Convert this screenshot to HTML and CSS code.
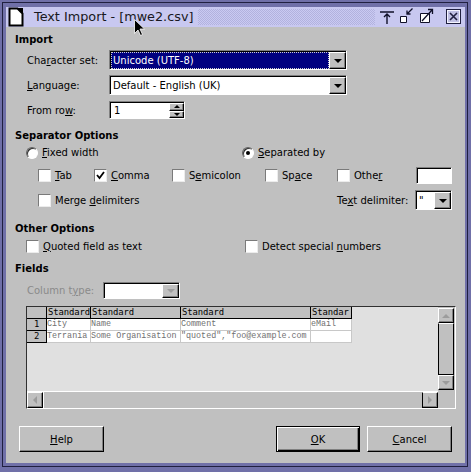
FILE: index.html
```html
<!DOCTYPE html>
<html lang="en">
<head>
  <meta charset="UTF-8" />
  <title>Text Import - [mwe2.csv]</title>
  <link rel="stylesheet" href="styles.css">
</head>
<body>
  <div class="frame">
    <div class="window">
      <div class="titlebar">
        <svg class="doc-icon" width="16" height="20" viewBox="0 0 16 20">
          <path d="M1.5 1.5H9.5L14.5 6.5V18.5H1.5Z" fill="#fff" stroke="#000" stroke-width="2"/>
          <path d="M9 1L15 7V1Z" fill="#000"/>
        </svg>
        <span class="title">Text Import - [mwe2.csv]</span>
        <div class="dots"></div>
        <svg class="tb-pin" width="15" height="20" viewBox="0 0 15 20">
          <path d="M0 5h14M7 7v10M4 10l3-3 3 3" stroke="#101028" stroke-width="1.4" fill="none"/>
        </svg>
        <svg class="tb-min" width="13" height="20" viewBox="0 0 13 20">
          <path d="M0.5 9.5h6v6h-6z" fill="#fff" stroke="#101028"/>
          <path d="M12.5 1.5L7 7M7 3.5V7H10.5" stroke="#101028" stroke-width="1.3" fill="none"/>
        </svg>
        <svg class="tb-max" width="14" height="20" viewBox="0 0 14 20">
          <path d="M0.5 6.5h9v9h-9z" fill="#fff" stroke="#101028"/>
          <path d="M2 14L12.5 2.5M8 2.5H12.5V7" stroke="#101028" stroke-width="1.3" fill="none"/>
        </svg>
        <svg class="tb-close" width="15" height="20" viewBox="0 0 15 20">
          <rect x="0.5" y="2.5" width="14" height="14" fill="#c0c0e4" stroke="#202040"/>
          <rect x="1.5" y="3.5" width="12" height="12" fill="none" stroke="#f4f4ff"/>
          <path d="M4 6l7 7M11 6l-7 7" stroke="#202040" stroke-width="1.6"/>
        </svg>
      </div>

      <div class="dialog">
        <div class="heading first">Import</div>

        <div class="row">
          <span class="label">Cha<u>r</u>acter set:</span>
          <div class="combo combo-wide">
            <div class="combo-text selected">Unicode (UTF-8)</div>
            <div class="drop"><i class="tri-down"></i></div>
          </div>
        </div>

        <div class="row">
          <span class="label"><u>L</u>anguage:</span>
          <div class="combo combo-wide">
            <div class="combo-text">Default - English (UK)</div>
            <div class="drop"><i class="tri-down"></i></div>
          </div>
        </div>

        <div class="row">
          <span class="label">From ro<u>w</u>:</span>
          <div class="spin">
            <div class="spin-text">1</div>
            <div class="spin-btns">
              <div class="spin-btn"><i class="tri-up small"></i></div>
              <div class="spin-btn"><i class="tri-down small"></i></div>
            </div>
          </div>
        </div>

        <div class="heading">Separator Options</div>

        <div class="row row-radio">
          <label class="opt opt-fixed"><span class="radio"></span><span><u>F</u>ixed width</span></label>
          <label class="opt"><span class="radio on"></span><span><u>S</u>eparated by</span></label>
        </div>

        <div class="row row-seps">
          <label class="opt w-tab"><span class="cb"></span><span><u>T</u>ab</span></label>
          <label class="opt w-comma">
            <span class="cb"><svg width="11" height="11" viewBox="0 0 11 11"><path d="M2 5l2.5 3L9 2" stroke="#000" stroke-width="1.8" fill="none"/></svg></span>
            <span><u>C</u>omma</span>
          </label>
          <label class="opt w-semi"><span class="cb"></span><span>S<u>e</u>micolon</span></label>
          <label class="opt w-space"><span class="cb"></span><span>Sp<u>a</u>ce</span></label>
          <label class="opt w-other"><span class="cb"></span><span>Othe<u>r</u></span></label>
          <div class="textbox"></div>
        </div>

        <div class="row row-seps">
          <label class="opt w-merge"><span class="cb"></span><span>Merge <u>d</u>elimiters</span></label>
          <span class="label-delim">Te<u>x</u>t delimiter:</span>
          <div class="combo combo-delim">
            <div class="combo-text">"</div>
            <div class="drop"><i class="tri-down"></i></div>
          </div>
        </div>

        <div class="heading other">Other Options</div>

        <div class="row row-radio row-quoted">
          <label class="opt opt-quoted"><span class="cb"></span><span><u>Q</u>uoted field as text</span></label>
          <label class="opt"><span class="cb"></span><span>Detect special <u>n</u>umbers</span></label>
        </div>

        <div class="heading">Fields</div>

        <div class="row row-type">
          <span class="label label-type">Column t<u>y</u>pe:</span>
          <div class="combo combo-type">
            <div class="combo-text"></div>
            <div class="drop"><i class="tri-down off"></i></div>
          </div>
        </div>

        <div class="preview">
          <div class="sheet">
            <div class="sheet-grid">
              <div class="hd"></div>
              <div class="hd">Standard</div>
              <div class="hd">Standard</div>
              <div class="hd">Standard</div>
              <div class="hd">Standar</div>

              <div class="rh">1</div>
              <div class="cell">City</div>
              <div class="cell">Name</div>
              <div class="cell">Comment</div>
              <div class="cell">eMail</div>

              <div class="rh">2</div>
              <div class="cell">Terrania</div>
              <div class="cell">Some Organisation</div>
              <div class="cell">"quoted","foo@example.com</div>
              <div class="cell"></div>
            </div>
          </div>
          <div class="vscroll">
            <div class="sb-btn"><i class="tri-up off"></i></div>
            <div class="thumb"></div>
            <div class="sb-btn"><i class="tri-down off"></i></div>
          </div>
          <div class="hscroll">
            <div class="sb-btn"><i class="tri-left off"></i></div>
            <div class="track"></div>
            <div class="sb-btn right"><i class="tri-right off"></i></div>
          </div>
          <div class="sb-corner"></div>
        </div>

        <div class="buttons">
          <button class="btn"><u>H</u>elp</button>
          <span class="spacer"></span>
          <button class="btn default"><u>O</u>K</button>
          <button class="btn"><u>C</u>ancel</button>
        </div>
      </div>
    </div>
  </div>

  <svg class="cursor" width="12" height="18" viewBox="0 0 12 18">
    <path d="M0.5 0.5V14.5L4 11L6.5 16.5L8.5 15.5L6 10H10.5Z" fill="#000" stroke="#fff" stroke-width="0.8"/>
  </svg>
</body>
</html>
```

FILE: styles.css
```css
* { box-sizing: border-box; }

body {
  margin: 0;
  width: 471px;
  height: 472px;
  overflow: hidden;
  position: relative;
  background: #7070a8;
  font-family: "DejaVu Sans", sans-serif;
  font-size: 10px;
  color: #000;
}

u { text-underline-offset: 1px; }

/* window decoration */
.frame {
  margin: 2px 3px 0 2px;
  border: 1px solid #202040;
  padding: 4px 2px 3px 3px;
}

.window {
  height: 456px;
  background: #c0c0c0;
  display: flex;
  flex-direction: column;
}

.titlebar {
  height: 20px;
  background: #c8c8f0;
  display: flex;
  align-items: center;
  flex-shrink: 0;
}

.doc-icon { margin-left: 2px; }

.title {
  margin-left: 10px;
  font-size: 12.8px;
  line-height: 20px;
  color: #181820;
  white-space: nowrap;
}

.dots {
  flex: 1;
  height: 16px;
  margin: 0 5px;
  background: repeating-conic-gradient(#b2b2de 0 25%, #cacaf2 0 50%) 0 0 / 2px 2px;
}

.tb-min { margin-left: 5px; }
.tb-max { margin-left: 7px; }
.tb-close { margin-left: 12px; margin-right: 4px; }

/* dialog body */
.dialog {
  flex: 1;
  padding: 6px 9px 0 9px;
}

.heading {
  font-weight: bold;
  line-height: 13px;
  height: 13px;
  margin-top: 9px;
}
.heading.first { margin-top: 0; }
.heading.other { margin-top: 12px; }

.row {
  display: flex;
  align-items: center;
  height: 20px;
  margin-top: 5px;
  padding-left: 12px;
  line-height: 13px;
  white-space: nowrap;
}
.heading + .row { margin-top: 4px; }

.label { width: 82px; }

.row-radio { height: 13px; padding-left: 11px; }
.row-seps { padding-left: 23px; }
.heading + .row-seps, .row-radio + .row-seps { margin-top: 6px; }
.row-quoted { height: 14px; }
.row-type { height: 18px; margin-top: 6px; }
.heading + .row-type { margin-top: 6px; }

.opt { display: flex; align-items: center; gap: 4px; }
.opt-fixed { width: 216px; }
.opt-quoted { width: 219px; }
.w-tab { width: 56px; }
.w-comma { width: 78px; }
.w-semi { width: 93px; }
.w-space { width: 72px; }
.w-other { width: 79px; }
.w-merge { width: 299px; }
.label-delim { width: 78px; }
.label-type { width: 76px; color: #8a8a8a; }

/* inputs */
.combo {
  display: flex;
  height: 20px;
  background: #fff;
  border: 1px solid;
  border-color: #808080 #fff #fff #808080;
  box-shadow: inset 1px 1px 0 #000;
  padding: 1px 0 0 1px;
}
.combo-wide { width: 238px; }
.combo-delim { width: 37px; }
.combo-type { width: 77px; height: 17px; }

.combo-text {
  flex: 1;
  padding-left: 2px;
  display: flex;
  align-items: center;
  overflow: hidden;
}
.combo-text.selected {
  background: #000080;
  color: #fff;
  outline: 1px dotted #d0d0d0;
  outline-offset: -1px;
}

.drop, .spin-btn, .sb-btn {
  display: flex;
  align-items: center;
  justify-content: center;
  background: #c0c0c0;
  border: 1px solid;
  border-color: #fff #000 #000 #fff;
  box-shadow: inset -1px -1px 0 #808080;
}
.drop { width: 17px; }

.tri-down, .tri-up, .tri-left, .tri-right {
  width: 0;
  height: 0;
  border: 4px solid transparent;
}
.tri-down { border-top-color: #000; border-bottom-width: 0; margin-top: 1px; }
.tri-up { border-bottom-color: #000; border-top-width: 0; }
.tri-left { border-right-color: #000; border-left-width: 0; }
.tri-right { border-left-color: #000; border-right-width: 0; }
.tri-down.small { border-width: 3px 3px 0 3px; margin-top: 0; }
.tri-up.small { border-width: 0 3px 3px 3px; }
.tri-down.off { border-top-color: #9c9c9c; }
.tri-up.off { border-bottom-color: #9c9c9c; }
.tri-left.off { border-right-color: #9c9c9c; }
.tri-right.off { border-left-color: #9c9c9c; }

.spin {
  display: flex;
  width: 76px;
  height: 18px;
  background: #fff;
  border: 1px solid;
  border-color: #808080 #fff #fff #808080;
  box-shadow: inset 1px 1px 0 #000;
  padding: 1px 0 0 1px;
}
.spin-text { flex: 1; padding-left: 3px; line-height: 15px; }
.spin-btns { display: flex; flex-direction: column; width: 15px; }
.spin-btn { flex: 1; }

.radio {
  position: relative;
  width: 12px;
  height: 12px;
  border-radius: 50%;
  background: #fff;
  border: 1px solid;
  border-color: #606060 #fff #fff #606060;
  box-shadow: inset 1px 1px 0 #303030;
}
.radio.on::after {
  content: "";
  position: absolute;
  left: 3px;
  top: 3px;
  width: 4px;
  height: 4px;
  border-radius: 50%;
  background: #000;
}

.cb {
  display: flex;
  align-items: center;
  justify-content: center;
  width: 13px;
  height: 13px;
  background: #fff;
  border: 1px solid;
  border-color: #7a7a7a #ececec #ececec #7a7a7a;
}

.textbox {
  width: 36px;
  height: 17px;
  background: #fff;
  border: 1px solid;
  border-color: #808080 #fff #fff #808080;
  box-shadow: inset 1px 1px 0 #000;
}

/* preview table */
.preview {
  margin: 7px 0 0 11px;
  height: 103px;
  border: 1px solid;
  border-color: #303030 #fff #fff #303030;
  display: grid;
  grid-template-columns: 1fr 17px;
  grid-template-rows: 1fr 17px;
}

.sheet {
  background: #e0e0e0;
  overflow: hidden;
}

.sheet-grid {
  display: grid;
  grid-template-columns: 20px 44px 90px 130px 41px;
  grid-auto-rows: 12px;
  width: max-content;
}

.hd, .rh {
  background: #c0c0c0;
  border-right: 1px solid #000;
  border-bottom: 1px solid #000;
  font-family: "DejaVu Sans Mono", monospace;
  font-size: 8.9px;
  line-height: 11px;
  letter-spacing: -0.1px;
  overflow: hidden;
  white-space: nowrap;
}
.hd { padding-left: 1px; }
.rh { text-align: center; }

.cell {
  background: #fff;
  border-right: 1px solid #c8c8c8;
  border-bottom: 1px solid #c8c8c8;
  font-family: "Liberation Mono", monospace;
  font-size: 8.4px;
  line-height: 11px;
  color: #707070;
  white-space: nowrap;
  overflow: hidden;
}

.vscroll {
  display: flex;
  flex-direction: column;
  background: #c0c0c0;
  padding: 1px 1px 1px 0;
}
.vscroll .sb-btn { height: 15px; }
.thumb {
  flex: 1;
  border: 1px solid;
  border-color: #fff #000 #000 #000;
  background: #c0c0c0;
}

.hscroll {
  display: flex;
  background: #c0c0c0;
  border-top: 1px solid #fff;
}
.hscroll .sb-btn { width: 16px; }
.hscroll .sb-btn.right { border-left-color: #000; }
.track { flex: 1; border-left: 1px solid #fff; }

.sb-corner { background: #c0c0c0; }

/* bottom buttons */
.buttons {
  display: flex;
  margin-top: 17px;
  height: 26px;
  padding: 0 4px;
}
.spacer { flex: 1; }

.btn {
  width: 85px;
  height: 26px;
  padding: 0;
  background: #c0c0c0;
  font-family: "DejaVu Sans", sans-serif;
  font-size: 10px;
  color: #000;
  border: 1px solid;
  border-color: #fff #000 #000 #fff;
  box-shadow: inset -1px -1px 0 #808080;
}
.btn.default {
  width: 84px;
  margin-right: 7px;
  border-color: #000;
  box-shadow: inset 1px 1px 0 #fff, inset -1px -1px 0 #000, inset -2px -2px 0 #808080;
}

.cursor {
  position: absolute;
  left: 134px;
  top: 19px;
}
```
